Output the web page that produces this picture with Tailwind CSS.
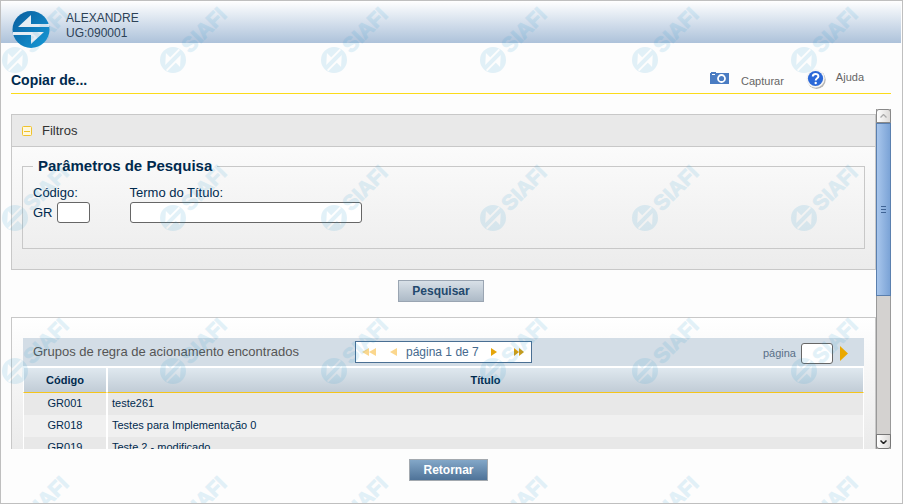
<!DOCTYPE html>
<html lang="pt-BR">
  <head>
    <meta charset="UTF-8" />
    <meta name="viewport" content="width=device-width, initial-scale=1.0" />
    <title>SIAFI - Copiar de...</title>
    <script src="https://cdn.jsdelivr.net/npm/@tailwindcss/browser@4"></script>
  </head>
  <body class="bg-[#fdfdfd] font-['Liberation_Sans',Arial,sans-serif] text-[#002a4e]">
    <div class="relative h-screen flex flex-col overflow-hidden border border-[#bfbfbf]">
      <!-- topo -->
      <header class="h-[42px] shrink-0 mr-px flex items-start gap-4 px-[11px] pt-[9px] bg-linear-to-b from-white to-[#adc2da]">
        <svg class="w-[38px] h-[38px] shrink-0" viewBox="0 0 38 38">
          <defs>
            <linearGradient id="logo" x1="0" y1="0" x2="1" y2="1">
              <stop offset="0" stop-color="#0a5c9c" />
              <stop offset="1" stop-color="#159ad8" />
            </linearGradient>
          </defs>
          <circle cx="19" cy="19.500" r="18.500" fill="url(#logo)" />
          <path d="M6 17 L19 5 V14 H37 V17 Z" fill="#e6edf4" />
          <path d="M1 22 H32 L19 34 V25 H1 Z" fill="#e6edf4" />
        </svg>
        <div class="pt-px text-[12px] leading-[15px] text-[#2d4257]">
          <p>ALEXANDRE</p>
          <p>UG:090001</p>
        </div>
      </header>

      <div class="h-[51px] shrink-0 ml-[10px] mr-[11px] flex items-end justify-between border-b border-[#fbdb1a]">
        <h1 class="text-[14px] leading-4 font-bold pb-[5px]">Copiar de...</h1>
        <nav class="flex items-start text-[11px] leading-3 text-[#666] pr-[27px] pb-1">
          <a href="#" class="flex items-start gap-3 pt-[3px]">
            <svg class="w-[19px] h-3" viewBox="0 0 19 12">
              <path d="M1 0h5v1h13v11H0V1h1z" fill="#4a7cc2" />
              <rect x="2" y="2" width="3" height="1" fill="#fff" />
              <circle cx="11.500" cy="6.500" r="3.500" fill="none" stroke="#fff" stroke-width="1.800" />
            </svg>
            <span class="pt-[3px]">Capturar</span>
          </a>
          <a href="#" class="flex items-start gap-[10px] ml-[22px]">
            <svg class="w-5 h-5" viewBox="0 0 20 20">
              <circle cx="10.500" cy="10.700" r="9.200" fill="#b5b5b5" />
              <circle cx="9.500" cy="9.500" r="9.200" fill="#f4f4f4" />
              <circle cx="9.500" cy="9.500" r="7.600" fill="#2b68d8" />
              <path d="M6.800 7.600c0-3.400 5.600-3.400 5.600-.3 0 2-2.700 2-2.700 4.200" fill="none" stroke="#fff" stroke-width="2" />
              <circle cx="9.700" cy="14" r="1.200" fill="#fff" />
            </svg>
            <span class="pt-[2px]">Ajuda</span>
          </a>
        </nav>
      </div>

      <!-- conteudo -->
      <main class="flex-1 min-h-0 mt-[15px] ml-[10px] mr-[11px] flex">
        <div class="flex-1 min-w-0 overflow-hidden pt-[5px]">
          <section class="border border-[#c8c8c8] bg-linear-to-b from-white to-[#ececec]">
            <h2 class="h-8 flex items-center gap-[10px] pl-[10px] border-b border-[#c8c8c8] bg-[#e9e9e9] text-[13px] text-[#333]">
              <svg class="w-[10px] h-[10px]" viewBox="0 0 10 10">
                <rect x=".5" y=".5" width="9" height="9" rx="1" fill="#fff8dc" stroke="#efc22c" />
                <path d="M2 5.500h6" stroke="#efc22c" />
              </svg>
              Filtros
            </h2>
            <div class="px-[10px] pt-[10px] pb-5">
              <fieldset class="h-[92px] px-[10px] border border-[#c8c8c8]">
                <legend class="px-[5px] text-[15px] leading-[18px] font-bold">Parâmetros de Pesquisa</legend>
                <div class="flex gap-10 pt-[10px] text-[13px] leading-4">
                  <div>
                    <label for="codigo" class="block">Código:</label>
                    <div class="flex items-center gap-1 mt-px">
                      GR
                      <input id="codigo" type="text" class="w-[33px] h-[21px] px-1 bg-white border border-[#666] rounded-[3px]" />
                    </div>
                  </div>
                  <div>
                    <label for="titulo" class="block">Termo do Título:</label>
                    <input id="titulo" type="text" class="block mt-px w-[232px] h-[21px] px-1 bg-white border border-[#666] rounded-[3px]" />
                  </div>
                </div>
              </fieldset>
            </div>
          </section>

          <div class="flex justify-center pt-[10px] pr-[5px] pb-[15px]">
            <button type="button" class="w-[86px] h-[22px] border border-[#9aa5b2] bg-linear-to-b from-[#d8e0e7] to-[#adbac7] text-[12px] font-bold text-[#23496d]">Pesquisar</button>
          </div>

          <section class="border border-[#c8c8c8] px-[11px] pt-5 pb-5 bg-linear-to-b from-white to-[#e6e6e6]">
            <div class="h-7 grid grid-cols-[1fr_auto_1fr] items-center bg-[#d3dde6]">
              <h2 class="pl-[10px] text-[13px] text-[#555]">Grupos de regra de acionamento encontrados</h2>
              <div class="w-[177px] h-[22px] flex items-center border border-[#4a6f93] bg-white pl-[6px] text-[12px] text-[#466a8e]">
                <button type="button" aria-label="Primeira página">
                  <svg class="w-[14px] h-2" viewBox="0 0 14 8"><path d="M7 0v8L0 4zM14 0v8L7 4z" fill="#fbd78d" /></svg>
                </button>
                <button type="button" aria-label="Página anterior" class="ml-[14px]">
                  <svg class="w-[7px] h-2" viewBox="0 0 7 8"><path d="M7 0v8L0 4z" fill="#fbd78d" /></svg>
                </button>
                <span class="w-[75px] ml-[9px] whitespace-nowrap">página 1 de 7</span>
                <button type="button" aria-label="Próxima página" class="ml-[10px]">
                  <svg class="w-[6px] h-2" viewBox="0 0 6 8"><path d="M0 0v8l6-4z" fill="#e5a50a" /></svg>
                </button>
                <button type="button" aria-label="Última página" class="ml-[17px]">
                  <svg class="w-[10px] h-2" viewBox="0 0 10 8"><path d="M0 0v8l5-4zM5 0v8l5-4z" fill="#d99c0a" /></svg>
                </button>
              </div>
              <div class="flex items-center justify-end pr-4 pt-[2px] text-[11px] text-[#5a7088]">
                <label for="pagina">página</label>
                <input id="pagina" type="text" class="w-8 h-[21px] ml-[5px] px-1 bg-white border border-[#666] rounded-[3px]" />
                <button type="button" aria-label="Ir para página" class="ml-[7px]">
                  <svg class="w-2 h-[15px]" viewBox="0 0 8 15"><path d="M0 0v15l8-7.500z" fill="#eaa800" /></svg>
                </button>
              </div>
            </div>
            <table class="w-full bg-white text-[11px] leading-[14px] border-separate border-spacing-0 border-t-2 border-white">
              <thead>
                <tr class="h-[25px]">
                  <th class="w-[84px] p-0 border-x border-x-white border-b border-b-[#f5c51b] bg-linear-to-b from-[#dfe8ef] to-[#c1ccd6]">Código</th>
                  <th class="p-0 border-x border-x-white border-b border-b-[#f5c51b] bg-linear-to-b from-[#dfe8ef] to-[#c1ccd6]">Título</th>
                </tr>
              </thead>
              <tbody>
                <tr class="h-[22px] bg-[#e8e8e8]">
                  <td class="pb-[2px] text-center border-x border-white">GR001</td>
                  <td class="pl-1 pb-[2px] border-x border-white">teste261</td>
                </tr>
                <tr class="h-[22px] bg-[#f0f0f0]">
                  <td class="pb-[2px] text-center border-x border-white">GR018</td>
                  <td class="pl-1 pb-[2px] border-x border-white">Testes para Implementação 0</td>
                </tr>
                <tr class="h-[22px] bg-[#e8e8e8]">
                  <td class="pb-[2px] text-center border-x border-white">GR019</td>
                  <td class="pl-1 pb-[2px] border-x border-white">Teste 2 - modificado</td>
                </tr>
              </tbody>
            </table>
          </section>
        </div>

        <!-- barra de rolagem -->
        <div class="w-[15px] shrink-0 flex flex-col bg-[#d4d2d0] border-x border-[#999]">
          <div class="h-[14px] -mx-px flex items-center justify-center rounded-t-[3px] border border-[#888] bg-linear-to-r from-white to-[#dcdad8]">
            <svg class="w-[7px] h-1" viewBox="0 0 7 4"><path d="M.5 3.500l3-3 3 3" fill="none" stroke="#aaa" stroke-width="1.300" /></svg>
          </div>
          <div class="h-[173px] -mx-px flex flex-col items-center justify-center gap-[2px] border border-[#5a7fae] bg-linear-to-r from-[#a8c6ec] to-[#7ba3d6]">
            <div class="w-[5px] h-px bg-[#3f6394]"></div>
            <div class="w-[5px] h-px bg-[#3f6394]"></div>
            <div class="w-[5px] h-px bg-[#3f6394]"></div>
          </div>
          <div class="h-[15px] -mx-px mt-auto flex items-center justify-center rounded-b-[3px] border border-[#777] bg-linear-to-r from-white to-[#dcdad8]">
            <svg class="w-[7px] h-1" viewBox="0 0 7 4"><path d="M.5.500l3 3 3-3" fill="none" stroke="#222" stroke-width="1.500" /></svg>
          </div>
        </div>
      </main>

      <footer class="h-[54px] shrink-0 flex justify-center pt-[10px] pr-[6px]">
        <button type="button" class="w-[79px] h-[22px] border border-[#a3a9af] bg-linear-to-b from-[#83a7c8] to-[#4f7398] text-[12px] font-bold text-white">Retornar</button>
      </footer>

      <!-- marca d'agua -->
      <svg class="absolute inset-0 w-full h-full pointer-events-none" fill="#1e96cd" opacity=".12" aria-hidden="true">
        <defs>
          <g id="marca">
            <path transform="rotate(-45)" fill-rule="evenodd" d="M-13 0a13 13 0 1 0 26 0a13 13 0 1 0-26 0zM-9-2L0-10v6h12v2zM9 2L0 10V4h-12V2z" />
            <text transform="translate(17 -6) rotate(-45)" font-size="21" font-weight="bold" stroke="#1e96cd" stroke-width="1">SIAFI</text>
          </g>
          <g id="coluna">
            <use href="#marca" y="59" />
            <use href="#marca" y="217" />
            <use href="#marca" y="370" />
            <use href="#marca" y="528" />
          </g>
        </defs>
        <use href="#coluna" x="14" />
        <use href="#coluna" x="172" />
        <use href="#coluna" x="333" />
        <use href="#coluna" x="492" />
        <use href="#coluna" x="644" />
        <use href="#coluna" x="803" />
      </svg>
    </div>
  </body>
</html>
